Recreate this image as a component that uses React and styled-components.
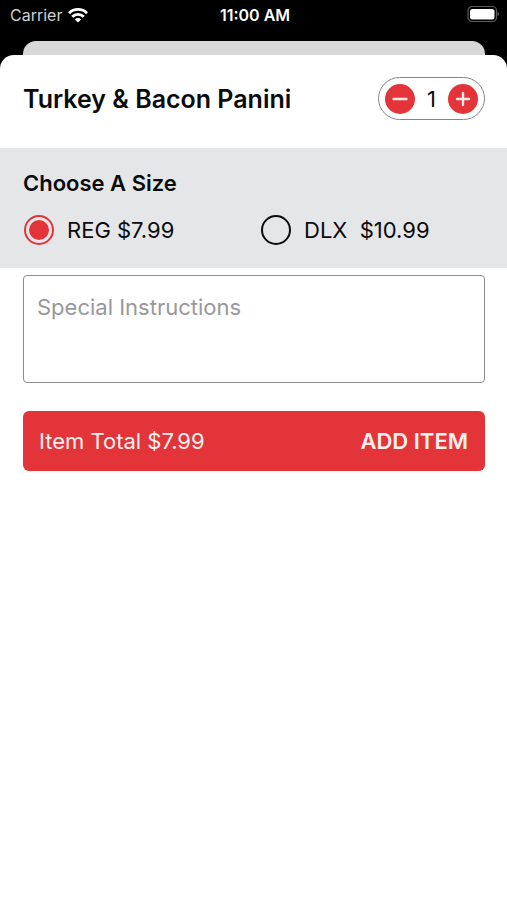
import React, { useState } from "react";
import styled, { createGlobalStyle } from "styled-components";

const RED = "#e33539";

const GlobalStyle = createGlobalStyle`
  *, *::before, *::after { box-sizing: border-box; }
  body {
    margin: 0;
    background: #fff;
    color: #0b0b0c;
    font-family: Inter, "Liberation Sans", sans-serif;
    font-size: 22px;
    line-height: 28px;
  }
  button, textarea { font: inherit; }
`;

const Screen = styled.div`
  display: flex;
  flex-direction: column;
  min-height: 100vh;
  background: linear-gradient(#000 50%, #fff 50%);
`;

const StatusBar = styled.header`
  display: grid;
  grid-template-columns: 1fr auto 1fr;
  align-items: start;
  height: 41px;
  padding: 5px 7px 0 10px;
  color: #fff;
  font-size: 16px;
  line-height: 20px;
`;

const Carrier = styled.span`
  display: flex;
  align-items: center;
  gap: 6px;
  color: #d0d0d0;
`;

const Time = styled.time`
  font-weight: 600;
`;

const Battery = styled.svg`
  justify-self: end;
`;

const BackCard = styled.div`
  height: 14px;
  margin: 0 22px 0 23px;
  border-radius: 13px 13px 0 0;
  background: #d8d8d8;
`;

const Sheet = styled.main`
  flex: 1;
  border-radius: 14px 14px 0 0;
  background: #fff;
`;

const ItemHeader = styled.div`
  display: flex;
  align-items: center;
  justify-content: space-between;
  padding: 22px 22px 28px 23px;
`;

const Title = styled.h1`
  margin: 0;
  font-size: 25px;
  font-weight: 600;
  line-height: 32px;
`;

const Stepper = styled.div`
  display: flex;
  align-items: center;
  justify-content: space-between;
  width: 107px;
  height: 43px;
  padding: 0 6px;
  border: 1px solid #858587;
  border-radius: 22px;
`;

const StepButton = styled.button`
  display: flex;
  padding: 0;
  border: 0;
  border-radius: 50%;
  background: ${RED};
  cursor: pointer;
`;

const SizeSection = styled.fieldset`
  min-width: 0;
  margin: 0;
  padding: 21px 22px 23px 23px;
  border: 0;
  background: #e4e6e8;
`;

const SectionTitle = styled.legend`
  float: left;
  width: 100%;
  padding: 0;
  font-weight: 600;
`;

const Options = styled.div`
  clear: both;
  display: grid;
  grid-template-columns: 1fr 1fr;
  gap: 13px;
  padding: 18px 0 0 1px;
`;

const Option = styled.label`
  display: flex;
  align-items: center;
  gap: 13px;
  height: 30px;
  white-space: pre;
  cursor: pointer;
`;

const Radio = styled.input`
  appearance: none;
  flex: none;
  width: 30px;
  height: 30px;
  margin: 0;
  border: 2px solid #0b0b0c;
  border-radius: 50%;

  &:checked {
    padding: 3px;
    border-color: ${RED};
    background: ${RED} content-box;
  }
`;

const OrderForm = styled.div`
  display: flex;
  flex-direction: column;
  gap: 28px;
  padding: 7px 22px 22px 23px;
`;

const Instructions = styled.textarea`
  display: block;
  width: 100%;
  height: 108px;
  padding: 17px 13px;
  border: 1px solid #8c8c8e;
  border-radius: 4px;
  background: #fff;
  color: inherit;
  resize: none;

  &::placeholder {
    color: #98989a;
    opacity: 1;
  }
`;

const AddButton = styled.button`
  display: flex;
  align-items: center;
  justify-content: space-between;
  height: 60px;
  padding: 0 17px 0 16px;
  border: 0;
  border-radius: 6px;
  background: ${RED};
  color: #fff0f0;
  cursor: pointer;
`;

const Action = styled.span`
  font-weight: 600;
`;

const SIZES = [
  { id: "reg", label: "REG $7.99", price: 7.99 },
  { id: "dlx", label: "DLX  $10.99", price: 10.99 },
];

function WifiIcon() {
  return (
    <svg width="20" height="15" viewBox="0 0 20 15" fill="none" stroke="#fff" strokeWidth="2.8" aria-hidden="true">
      <path d="M1 5.2a12.7 12.7 0 0 1 18 0" />
      <path d="M4.2 8.7a8.2 8.2 0 0 1 11.6 0" />
      <path d="M10 14.6 6.9 11.4a4.4 4.4 0 0 1 6.2 0Z" fill="#fff" stroke="none" />
    </svg>
  );
}

function BatteryIcon() {
  return (
    <Battery width="33" height="18" viewBox="0 0 33 18" role="img" aria-label="Battery full">
      <rect x="1" y="1.5" width="28.5" height="15" rx="4" fill="none" stroke="#5c5c5c" strokeWidth="1.2" />
      <rect x="3" y="4" width="24.5" height="10.5" rx="2.5" fill="#fff" />
      <path d="M30.5 7v4c1-.3 1.5-1.1 1.5-2s-.5-1.7-1.5-2Z" fill="#5c5c5c" />
    </Battery>
  );
}

function StepIcon({ plus }) {
  return (
    <svg width="30" height="30" viewBox="0 0 30 30" stroke="#ffe9e9" strokeWidth="2.4" strokeLinecap="round" aria-hidden="true">
      <path d={plus ? "M9 15h12M15 9v12" : "M8.5 15h13"} />
    </svg>
  );
}

export default function App() {
  const [size, setSize] = useState("reg");
  const [count, setCount] = useState(1);
  const total = SIZES.find((s) => s.id === size).price * count;

  return (
    <Screen>
      <GlobalStyle />
      <StatusBar>
        <Carrier>
          Carrier
          <WifiIcon />
        </Carrier>
        <Time>11:00 AM</Time>
        <BatteryIcon />
      </StatusBar>
      <BackCard />
      <Sheet>
        <ItemHeader>
          <Title>Turkey &amp; Bacon Panini</Title>
          <Stepper>
            <StepButton type="button" aria-label="Decrease quantity" onClick={() => setCount(Math.max(1, count - 1))}>
              <StepIcon />
            </StepButton>
            <span>{count}</span>
            <StepButton type="button" aria-label="Increase quantity" onClick={() => setCount(count + 1)}>
              <StepIcon plus />
            </StepButton>
          </Stepper>
        </ItemHeader>
        <SizeSection>
          <SectionTitle>Choose A Size</SectionTitle>
          <Options>
            {SIZES.map((s) => (
              <Option key={s.id}>
                <Radio type="radio" name="size" checked={size === s.id} onChange={() => setSize(s.id)} />
                {s.label}
              </Option>
            ))}
          </Options>
        </SizeSection>
        <OrderForm>
          <Instructions aria-label="Special Instructions" placeholder="Special Instructions" />
          <AddButton type="button">
            <span>Item Total ${total.toFixed(2)}</span>
            <Action>ADD ITEM</Action>
          </AddButton>
        </OrderForm>
      </Sheet>
    </Screen>
  );
}
